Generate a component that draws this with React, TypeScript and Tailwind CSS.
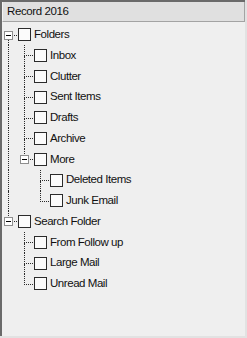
import React from 'react'

type TreeNode = { label: string; children?: TreeNode[] }

const tree: TreeNode[] = [
  {
    label: 'Folders',
    children: [
      { label: 'Inbox' },
      { label: 'Clutter' },
      { label: 'Sent Items' },
      { label: 'Drafts' },
      { label: 'Archive' },
      { label: 'More', children: [{ label: 'Deleted Items' }, { label: 'Junk Email' }] },
    ],
  },
  {
    label: 'Search Folder',
    children: [{ label: 'From Follow up' }, { label: 'Large Mail' }, { label: 'Unread Mail' }],
  },
]

type Row = { node: TreeNode; lines: boolean[]; last: boolean; first: boolean }

function flatten(nodes: TreeNode[], lines: boolean[], out: Row[], root: boolean) {
  nodes.forEach((node, i) => {
    const last = i === nodes.length - 1
    out.push({ node, lines, last, first: root && i === 0 })
    if (node.children) flatten(node.children, [...lines, !last], out, false)
  })
  return out
}

function Expander() {
  return (
    <div className="absolute left-[3px] top-[6px] w-[9px] h-[9px] border border-[#8e8e8e] bg-white flex items-center justify-center">
      <div className="w-[5px] h-px bg-black" />
    </div>
  )
}

function TreeRow({ row }: { row: Row }) {
  return (
    <div className="flex h-[20.75px] items-stretch">
      {row.lines.map((on, i) => (
        <div key={i} className="w-4 shrink-0">
          {on && <div className="ml-[7px] h-full w-0 border-l border-dotted border-[#2a2a2a]" />}
        </div>
      ))}
      <div className="relative w-4 shrink-0 flex flex-col">
        <div className="h-[11px] flex">
          <div className="w-[7px]" />
          <div
            className={
              'flex-1 border-b border-dotted border-[#2a2a2a] ' +
              (row.first ? '' : 'border-l')
            }
          />
        </div>
        <div className="flex-1">
          {!row.last && <div className="ml-[7px] h-full w-0 border-l border-dotted border-[#2a2a2a]" />}
        </div>
        {row.node.children && <Expander />}
      </div>
      <div className="flex items-center ml-px">
        <div className="w-[13px] h-[13px] border border-[#2b2b2b] bg-[#fbfbfb]" />
        <span className="ml-[3px] text-[11.5px] tracking-[-0.45px] text-[#111] leading-none">{row.node.label}</span>
      </div>
    </div>
  )
}

export default function App() {
  const rows = flatten(tree, [], [], true)
  return (
    <div className="w-[247px] h-[338px] bg-[#e2e2e2] font-['Liberation_Sans',Arial,sans-serif]">
      <div className="w-[245px] h-[336px] border-t-2 border-l-2 border-[#6a6a6a] bg-[#efefef] flex flex-col">
        <div className="h-5 shrink-0 bg-[#e0e0e0] border-b border-r border-[#a3a3a3] border-l border-l-[#f4f4f4] flex items-center pl-1">
          <span className="text-[11.5px] tracking-[-0.4px] text-[#111] leading-none">Record 2016</span>
        </div>
        <div className="pt-[2.6px] -ml-px">
          {rows.map((r, i) => (
            <TreeRow key={i} row={r} />
          ))}
        </div>
      </div>
    </div>
  )
}
